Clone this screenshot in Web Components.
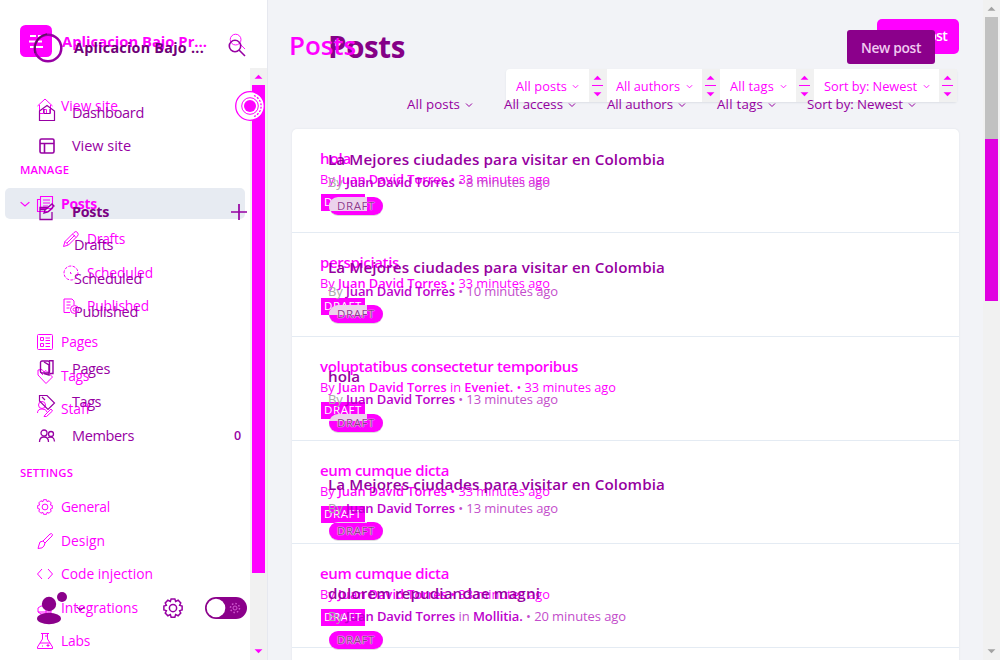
<!DOCTYPE html>
<html lang="en"><head><meta charset="utf-8"><title>Posts</title>
<style>html,body{margin:0;height:660px;overflow:hidden;background:#f2f3f7;font-family:"Open Sans","Noto Sans",sans-serif}</style></head>
<body><compare-view></compare-view>
<script>
const icons={
search:'<circle cx="7" cy="7" r="5.7"/><path d="M11 11l6 6"/>',
home:'<path d="M.5 8L8 1l7.500 7M2.500 7v8.500h4v-4h3v4h4V7"/>',
box:'<path d="M.5 6L8 .5 15.500 6v9.500H.5zM5 8.500h6M5 4v4.500M11 4v4.500"/>',
layout:'<rect x="1" y="1" width="14" height="14" rx="1.500"/><path d="M1 5.500h14M5.500 5.500V15"/>',
posts:'<path d="M3.500.5h12v12h-12zM3.500 3.500h-3v12h11l4-3M6 4h7M6 7h7M6 10h5"/>',
edit:'<path d="M9 3.500H1v12h12V8M5 9l1-3 7-6 2 2-6 6zM1 5.500h6"/>',
pencil:'<path d="M.5 15.500l1.500-5L11 1.500q2-2 3.500 0t0 3.500l-9 9zM2 10.500l3.500 3.500M9.500 3l3.500 3.500M4 12l8-8"/>',
clock:'<circle cx="8" cy="8" r="7" stroke-dasharray="3 1.300"/><path d="M7.500 7v1.500h1"/>',
published:'<path d="M7 14.500H1V1h8l2 2v4M3.500 4h4M3.500 7h4M3.500 10h3"/><circle cx="11.500" cy="11.500" r="4"/><circle cx="11.500" cy="11.500" r="1.500"/>',
pages:'<rect x=".5" y=".5" width="15" height="15" rx="1"/><path d="M3.500 3.500h3v3h-3zM3.500 9.500h3v3h-3zM8.500 4h4.500M8.500 6.500h4.500M8.500 9.500h4.500M8.500 12.500h4.500"/>',
copy:'<rect x="1.500" y="1" width="9" height="12" rx="1.500"/><path d="M5 13.500L10 15V5L5 2M10 .7h4v12.800h-3"/>',
tag:'<path d="M.5 1.500V7L9 15.500 15.500 9 8 1.500zM3 3l3 3"/>',
heart:'<path d="M1 2v5l8 8.500L15.500 9 9 2.500 7 4 5 1.500zM3 4l3 3"/>',
staff:'<circle cx="5" cy="4" r="3.500"/><path d="M.5 12q0-4 4.500-4t5 3M8 14l6-6 1.500 2-6 5.500H7z"/>',
members:'<circle cx="5" cy="5" r="3"/><circle cx="12" cy="6" r="2.500"/><path d="M.5 14q0-5 4.500-5t4.500 5M9 9.500q6-2 6.500 4"/>',
gear:'<circle cx="8" cy="8" r="2.900"/><path d="M6.500.7h3l.6 2 2-.9 2.100 2.100-.9 2 2 .6v3l-2 .6.9 2-2.100 2.100-2-.9-.6 2h-3l-.6-2-2 .9-2.100-2.100.9-2-2-.6v-3l2-.6-.9-2 2.100-2.100 2 .9z"/>',
brush:'<path d="M6 8l7-7q2-1 2.500.5L15 3l-7 7zM6 8q-4 0-4 4l-1 3.500q5 0 6-2.500l1-3"/>',
code:'<path d="M5 3L.5 8 5 13M11 3l4.500 5L11 13"/>',
integ:'<path d="M1 8l3-2h5v8H4l-3-2zM9 8h5v6H9M1 12h13"/>',
labs:'<path d="M4 .5h8M5.500.5V6L.5 14v1.500h15V14l-5-8V.5M3 10h10M8 3h2M5 13h1M11 11v3M9.500 12.500h3"/>',
plus:'<path d="M8 0v16M0 8h16"/>',
chev:'<path d="M1 5l7 6 7-6"/>',
chevS:'<path d="M2 5l6 6 6-6"/>',
up:'<path d="M1 12h14L8 5z" fill="currentColor" stroke="none"/>',
down:'<path d="M1 4h14l-7 7z" fill="currentColor" stroke="none"/>',
logo:'<rect width="32" height="32" rx="5.500" fill="#f0f" stroke="none"/><path stroke="#fff" stroke-width="2.200" d="M10 11h6m2 0h5M9 16.500h7m2 0h4M10 22h13"/>',
ring:'<circle cx="15" cy="15" r="13.300"/><path stroke="#5c115c" stroke-width="1.500" d="M2 20Q0 5 14 1"/>',
avatar:'<g fill="#8b008b" stroke="none"><circle cx="13" cy="13" r="7.200"/><ellipse cx="13" cy="27.500" rx="12" ry="5.700"/><circle cx="26" cy="6" r="5"/></g>',
target:'<g stroke="#f0f" fill="#fff"><circle cx="16" cy="16" r="14.300"/><path fill="none" stroke-dasharray="2 1.500" d="M20 5.500A11.300 11.300 0 0 1 20 26.500"/><circle cx="16" cy="16" r="8.300" stroke-width="1"/><circle cx="16" cy="16" r="6" fill="#f0f" stroke="none"/></g>',
toggle:'<rect width="42" height="22" rx="11" fill="#8b008b" stroke="none"/><circle cx="11" cy="11" r="9.300" fill="#fff" stroke="none"/><circle cx="30" cy="11" r="4.500" stroke="#d05ad0" stroke-width="1.500" stroke-dasharray="1.500 2"/><circle cx="30" cy="11" r="2" stroke="#d05ad0"/>'
};
const boxes={search:18,logo:32,ring:30,avatar:'32 34',target:32,toggle:'42 22'};
const ic=(n,x,w=16,h=w,sw=1,dy=0)=>({x,w,html:`<line-icon name="${n}" w="${w}" h="${h}" sw="${sw}" dy="${dy}"></line-icon>`});
const tx=(t,x,w,fs=15,fw=400,c='',dy=0)=>({x,w,html:`<fit-text w="${w}" style="font-size:${fs}px;font-weight:${fw};${c?'color:'+c+';':''}${dy?'transform:translateY('+dy+'px);':''}">${t}</fit-text>`});
/* A stack of rows, each described by its centre line and the items along it. */
function rows(list){let y=0;return list.map(([c,items,h=20,cls=''])=>{let x=0;const top=c-h/2-y;y=c+h/2;
 return `<div class="row ${cls}" style="height:${h}px;margin-top:${top}px">`+items.map(i=>{const m=i.x-x;x=i.x+i.w;return `<span style="margin-left:${m}px">${i.html}</span>`}).join('')+'</div>'}).join('')}
const css=`:host{display:flow-root}.row{display:flex;align-items:center;white-space:nowrap}.row>span{display:flex;flex:none;align-items:center}`;
function el(name,make){customElements.define(name,class extends HTMLElement{connectedCallback(){if(this.shadowRoot)return;this.attachShadow({mode:'open'}).innerHTML=make(this)}})}
customElements.define('fit-text',class extends HTMLElement{connectedCallback(){if(this.shadowRoot)return;
 this.attachShadow({mode:'open'}).innerHTML='<style>:host{display:inline-block;flex:none;white-space:nowrap;line-height:20px}</style><slot></slot>';
 const w=+this.getAttribute('w'),n=this.textContent.length,now=this.getBoundingClientRect().width;
 this.style.letterSpacing=((w-now)/n)+'px';this.style.width=w+'px'}});
el('line-icon',e=>{const n=e.getAttribute('name'),b=String(boxes[n]||16).split(' ');return `<style>:host{display:block;flex:none;line-height:0}svg{display:block;overflow:visible;transform:translateY(${e.getAttribute('dy')}px)}</style><svg width="${e.getAttribute('w')}" height="${e.getAttribute('h')}" viewBox="0 0 ${b[0]} ${b[1]||b[0]}" fill="none" stroke="currentColor" stroke-width="${e.getAttribute('sw')}">${icons[n]}</svg>`});
el('scroll-bar',e=>`<style>:host{display:flex;flex-direction:column;align-items:center;width:17px;background:#f1f1f1;color:${e.getAttribute('arrow')}}line-icon{height:17px;display:flex;align-items:center}.th{width:13px;height:${e.getAttribute('thumb')}px;background:${e.getAttribute('fill')}}.fill{flex:1}</style><line-icon name="up" w="9" h="11" sw="1" dy="0"></line-icon><div class="th"></div><div class="fill"></div><line-icon name="down" w="9" h="11" sw="1" dy="0"></line-icon>`);
el('nav-back',()=>`<style>${css}:host{color:#f0f}.sel{background:#e7ebf2;border-radius:5px;width:240px;margin-left:5px}</style>`+rows([
 [41,[ic('logo',20,32),tx('Aplicacion Bajo Pr...',62,145,14.8,700),ic('search',229,17,17,1,0)],32],
 [106,[ic('home',37),tx('View site',61,57,13.800)]],
 [170,[tx('MANAGE',20,49,11.3,600)]],
 [203.5,[ic('chev',15,10,10,2),ic('posts',32,16,16,1.1),tx('Posts',56,36,14,700)],31,'sel'],
 [239,[ic('pencil',63),tx('Drafts',87,38,13.8)]],
 [273,[ic('clock',63),tx('Scheduled',87,66,13.8)]],
 [306,[ic('published',63),tx('Published',87,62,13.8)]],
 [342,[ic('pages',37),tx('Pages',61,37,13.8)]],
 [376,[ic('heart',37),tx('Tags',61,28,13.8)]],
 [409,[ic('staff',37),tx('Staff',61,29,13.8)]],
 [473,[tx('SETTINGS',20,53,11.3,600)]],
 [507,[ic('gear',37),tx('General',61,49,13.8)]],
 [540.5,[ic('brush',37),tx('Design',61,44,13.8)]],
 [574,[ic('code',37),tx('Code injection',61,92,13.8)]],
 [608,[ic('integ',37),tx('Integrations',61,77,13.8)]],
 [641,[ic('labs',37),tx('Labs',61,29,13.8)]]]));
el('nav-front',()=>`<style>${css}:host{color:#9700a3}</style>`+rows([
 [48,[ic('ring',33,30,30,2.5),tx('Aplicacion Bajo ...',74,130,14.3,700,'#6f0078'),ic('search',228,18,18,1.6)],30],
 [113,[ic('box',39,16,16,1.2),tx('Dashboard',72,72,14.5)]],
 [146,[ic('layout',39,16,16,1.6),tx('View site',72,59,14.5)]],
 [212,[ic('edit',39,16,16,1.3),tx('Posts',72,37,14.3,700,'#7b0083'),ic('plus',231,16,16,1.7)]],
 [245,[tx('Drafts',74,39,14.5)]],[279,[tx('Scheduled',74,68,14.5)]],[312,[tx('Published',74,64,14.5)]],
 [369,[ic('copy',39,16,16,1.4,-1),tx('Pages',72,38,14.5)]],
 [402,[ic('tag',39,16,16,1.2),tx('Tags',72,29,14.5)]],
 [436,[ic('members',39,16,16,1.3),tx('Members',72,62,14.5),tx('0',234,7,12.5,600)]],
 [608,[ic('avatar',36,32,34),ic('chev',76,9,9,2),ic('gear',163,20,20,1.2),ic('toggle',205,42,22)],34]]));
el('filter-spinner',()=>`<style>:host{display:flex;flex-direction:column;align-items:center;justify-content:space-evenly;box-sizing:border-box;width:18px;padding-right:1px;height:33px;background:#f1f1f1;color:#f0f}i{width:11px;height:1px;background:#f0f}</style><line-icon name="up" w="9" h="9" sw="1" dy="0"></line-icon><i></i><line-icon name="down" w="9" h="9" sw="1" dy="0"></line-icon>`);
const sp=x=>({x,w:18,html:'<filter-spinner></filter-spinner>'});
const names='By <b>Juan David Torres</b>';
el('post-badge',e=>{const f=e.getAttribute('kind')==='front',v=+e.getAttribute('veil')||0;return `<style>:host{display:flex;align-items:center;justify-content:center;box-sizing:border-box;${f?`width:54px;height:18px;border-radius:9px;background:${v?`linear-gradient(#ecd3ec,#ecd3ec) 0 0/38px ${v}px no-repeat,`:''}#f0f;color:#8c398c;text-shadow:0 0 1px #f5dff5,0 0 1px #f5dff5,0 0 1px #f5dff5;box-shadow:0 1px 0 #ddd`:'width:44px;height:17px;background:#f0f;color:#fff'}}fit-text{font-size:11.5px;line-height:16px}</style><fit-text w="38"><slot></slot>DRAFT</fit-text>`});
const badge=(x,k,v=0)=>({x,w:k==='front'?54:44,html:`<post-badge kind="${k}" veil="${v}"></post-badge>`});
el('posts-back',()=>{
 const d=[['hola',31,'',230],['perspiciatis',79,'',230],['voluptatibus consectetur temporibus',258,' in <b>Eveniet.</b>',296],['eum cumque dicta',129,'',230],['eum cumque dicta',129,'',230],['',0,'',0]];
 return `<style>${css}:host{color:#f0f}b{font-weight:600}.bar{display:flex;align-items:center;height:33px;width:451px;margin:14.5px 0 0 238px;background:#fff;border-radius:4px 4px 3px 3px;box-shadow:0 1px 2px #dcdfe6}.bar>span{flex:none;display:flex}.btn{display:flex;width:82px;height:35px;background:#f0f;color:#fff;border-radius:5px;align-items:center;justify-content:flex-end;padding-right:12px;box-sizing:border-box}.list{margin:27px 0 0 24px;width:667px;background:#fff;border-radius:5px;box-shadow:0 0 2px #dcdfe6}article{display:flow-root;height:104px;box-sizing:border-box;border-bottom:1px solid #e4ebf3}article:nth-child(4){height:103px}</style>`+
 rows([[36,[tx('Posts',21,67,26,600,'',8.500),{x:609,w:82,html:'<div class="btn"><fit-text w="58" style="font-size:14px;font-weight:600">New post</fit-text></div>'}],37]])+
 `<div class="bar">`+(()=>{let x=0;return [tx('All posts',10,51,12.8,400,'',-.5),ic('chevS',66,7,7,2,1),sp(83),tx('All authors',110,64,12.8,400,'',-.5),ic('chevS',180,7,7,2,1),sp(196),tx('All tags',224,44,12.8,400,'',-.5),ic('chevS',274,7,7,2,1),sp(290),tx('Sort by: Newest',318,93,12.8,400,'',-.5),ic('chevS',417,7,7,2,1),sp(433)].map(i=>{const m=i.x-x;x=i.x+i.w;return `<span style="margin-left:${m}px">${i.html}</span>`}).join('')})()+`</div><div class="list">`+
 d.map(p=>'<article>'+(p[0]?rows([[28.9,[tx(p[0],28,p[1],15,600)]],[50.4,[tx(names+p[2]+' • 33 minutes ago',28,p[3],12.8)]],[73.5,[badge(29,'back')],17]]):'')+'</article>').join('')+'</div>'});
el('posts-front',()=>{
 const d=[['La Mejores ciudades para visitar en Colombia',337,'',8,222,14],['La Mejores ciudades para visitar en Colombia',337,'',10,230,10],['hola',32,'',13,230,7],['La Mejores ciudades para visitar en Colombia',337,'',13,230,1],['dolorem repudiandae magni',212,' in <b>Mollitia.</b>',20,298,0]];
 const f=(t,x,w)=>[tx(t,x,w,13.3,400),ic('chevS',x+w+5,8,8,2,1)];
 return `<style>${css}:host{color:#9600a0}b{font-weight:600;color:#bc00cc}.btn{display:flex;align-items:center;justify-content:center;background:#8b008b;color:#f1c9f1;width:88px;height:34px;border-radius:3px}.list{margin:11.6px 0 0 23px}article{display:flow-root;height:108.5px}</style>`+
 rows([[47,[tx('Posts',60,77,29.5,700,'#850087'),{x:579,w:88,html:'<div class="btn"><fit-text w="60" style="font-size:13.8px;font-weight:600;transform:translateY(1px)">New post</fit-text></div>'}],34],
 [104,[...f('All posts',139,53),...f('All access',236,59),...f('All authors',339,66),...f('All tags',449,46),...f('Sort by: Newest',539,96)]]])+
 `<div class="list">`+d.map(p=>'<article>'+rows([[33,[tx(p[0],37,p[1],15.2,650)]],[56.5,[tx(`<span style="color:#aaa">By</span> <b>Juan David Torres</b>${p[2]} • ${p[3]} minutes ago`,37,p[4],13,400,'#c34dcb')]],[80,[badge(38,'front',p[5])],18]])+'</article>').join('')+'</div>'});
el('compare-view',()=>`<style>:host{display:grid;grid-template-columns:268px 715px 17px;height:660px;overflow:hidden}.side,.main{display:grid;position:relative;overflow:hidden;height:660px}.side{background:#fff;border-right:1px solid #e6e8ef;box-sizing:border-box}.side>*,.main>*{grid-area:1/1}.rail{justify-self:end;height:592px;margin-top:68px}.target{position:absolute;left:234px;top:90px}</style>
<aside class="side"><nav-back></nav-back><scroll-bar class="rail" thumb="488" fill="#f0f" arrow="#f0f"></scroll-bar><nav-front></nav-front><line-icon class="target" name="target" w="32" h="32" sw="1.300" dy="0"></line-icon></aside>
<main class="main"><posts-back></posts-back><posts-front></posts-front></main>
<scroll-bar thumb="284" fill="linear-gradient(#c1c1c1 122px,#e000e0 122px)" arrow="#a3a3a3"></scroll-bar>`);
</script></body></html>
